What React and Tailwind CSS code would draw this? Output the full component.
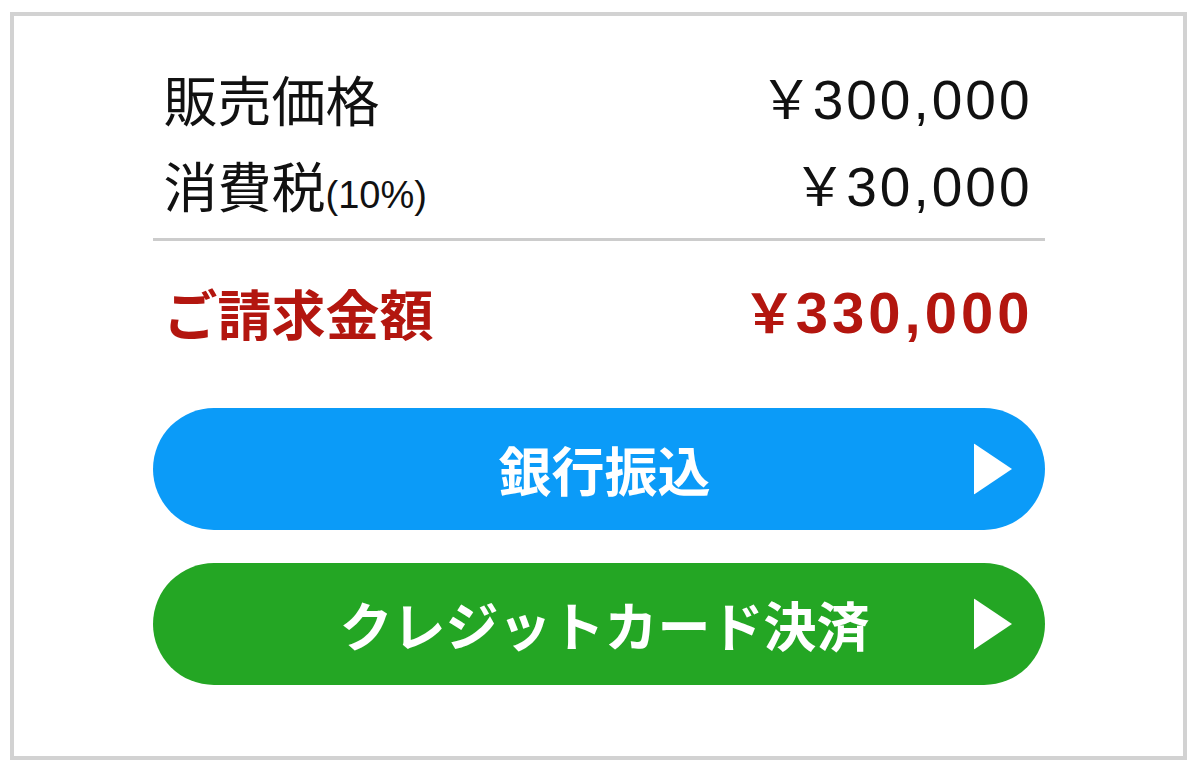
import React from 'react';

const Arrow = () => (
  <svg width="38" height="51" viewBox="0 0 38 51" className="shrink-0">
    <polygon points="0,0 38,25.5 0,51" fill="#ffffff" />
  </svg>
);

const PayButton = ({ label, color }) => (
  <button className={`relative flex h-[122px] w-full items-center justify-center rounded-full ${color}`}>
    <span className="pl-[12px] font-['Noto_Sans_CJK_JP',sans-serif] text-[53px] font-bold leading-none text-white">
      {label}
    </span>
    <span className="absolute right-[33px] top-1/2 -translate-y-1/2">
      <Arrow />
    </span>
  </button>
);

const Price = ({ value, bold }) => (
  <span className={`flex items-baseline leading-none ${bold ? 'font-bold' : ''}`}>
    <span className="font-['Noto_Sans_CJK_JP',sans-serif] text-[53px]">￥</span>
    <span
      className={`font-['Liberation_Sans',sans-serif] ${
        bold ? 'text-[58px] tracking-[4px] -mr-[4px]' : 'text-[55px] tracking-[3px] -mr-[3px]'
      }`}
    >
      {value}
    </span>
  </span>
);

export default function App() {
  return (
    <div className="min-h-[776px] bg-white pl-[10px] pt-[12px]">
      <div className="flex h-[748px] w-[1177px] flex-col items-center border-4 border-[#d2d2d2] bg-white">
        <div className="w-[892px] pt-[39px]">
          <div className="flex h-[87px] items-center justify-between pl-[11px] pr-[15px] text-[#111]">
            <span className="font-['Noto_Sans_CJK_JP',sans-serif] text-[54px] leading-none">販売価格</span>
            <Price value="300,000" />
          </div>
          <div className="flex h-[87px] items-center justify-between pl-[11px] pr-[15px] text-[#111]">
            <span className="flex items-baseline leading-none">
              <span className="font-['Noto_Sans_CJK_JP',sans-serif] text-[54px]">消費税</span>
              <span className="font-['Liberation_Sans',sans-serif] text-[38px]">(10%)</span>
            </span>
            <Price value="30,000" />
          </div>
          <div className="mt-[9px] h-[3px] bg-[#cccccc]" />
          <div className="mt-[36px] flex h-[72px] items-center justify-between pl-[11px] pr-[15px] text-[#b3160f]">
            <span className="font-['Noto_Sans_CJK_JP',sans-serif] text-[54px] font-bold leading-none">ご請求金額</span>
            <Price value="330,000" bold />
          </div>
          <div className="mt-[59px] flex flex-col gap-[33px]">
            <PayButton label="銀行振込" color="bg-[#0b9bf8]" />
            <PayButton label="クレジットカード決済" color="bg-[#24a624]" />
          </div>
        </div>
      </div>
    </div>
  );
}
